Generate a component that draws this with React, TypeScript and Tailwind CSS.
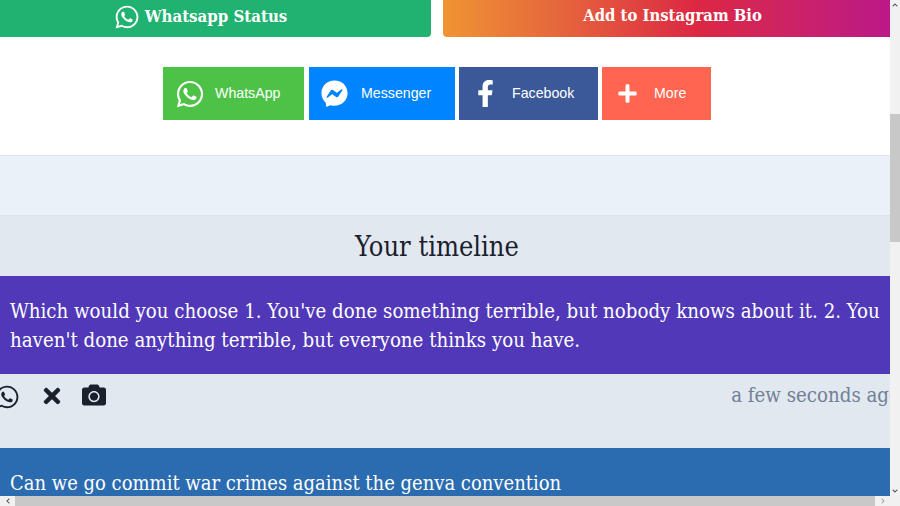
import React from "react";
import { FaWhatsapp, FaFacebookMessenger, FaFacebookF, FaPlus, FaTimes, FaCamera, FaChevronUp, FaChevronDown, FaChevronLeft, FaChevronRight } from "react-icons/fa";

const serif = "font-['DejaVu_Serif_Condensed','DejaVu_Serif',serif]";

function Share({ bg, w, ml, icon, label, gap }: { bg: string; w: string; ml: string; icon: React.ReactNode; label: string; gap: string }) {
  return (
    <div className={`${bg} ${w} ${ml} ${gap} h-[53px] flex items-center text-white text-[14.2px] font-['Liberation_Sans',sans-serif]`}>
      {icon}
      <span>{label}</span>
    </div>
  );
}

export default function App() {
  return (
    <div className={`w-[900px] h-[506px] overflow-hidden flex flex-col bg-white ${serif} [font-stretch:condensed]`}>
      <div className="flex h-[496px] min-h-0">
        <div className="w-[890px] overflow-hidden flex flex-col">
          <div className="flex h-[37px] shrink-0">
            <div className="w-[431px] bg-[#1fb270] rounded-br-[4px] flex items-center justify-center gap-[5px] pr-[30px] text-white font-bold text-[16.7px] pb-[4px]">
              <FaWhatsapp className="text-[26px]" />
              <span>Whatsapp Status</span>
            </div>
            <div className="ml-[12px] flex-1 rounded-bl-[4px] bg-[linear-gradient(90deg,#f09433,#e6683c_25%,#dc2743_57%,#cc2366_78%,#bc1888)] flex items-center justify-center pb-[4px] pl-[12px] text-white font-bold text-[16.5px]">
              Add to Instagram Bio
            </div>
          </div>
          <div className="h-[119px] shrink-0 flex pt-[30px] pl-[163px] border-b border-[#dfe5ed]">
            <Share bg="bg-[#4dc247]" w="w-[141px] pl-[12px]" ml="" gap="gap-[10px]" label="WhatsApp" icon={<FaWhatsapp className="text-[30px]" />} />
            <Share bg="bg-[#0084ff]" w="w-[146px] pl-[12px]" ml="ml-[5px]" gap="gap-[13px]" label="Messenger" icon={<FaFacebookMessenger className="text-[27px]" />} />
            <Share bg="bg-[#3b5998]" w="w-[139px] pl-[13px]" ml="ml-[4px]" gap="gap-[13px]" label="Facebook" icon={<FaFacebookF className="text-[27px]" />} />
            <Share bg="bg-[#ff6550]" w="w-[109px] pl-[15px]" ml="ml-[4px]" gap="gap-[16px]" label="More" icon={<FaPlus className="text-[21px]" />} />
          </div>
          <div className="h-[60px] shrink-0 bg-[#ebf1f8] border-b border-[#dde3ea]" />
          <div className="h-[60px] shrink-0 bg-[#e2e8f0] flex items-center justify-center pr-[16px] pt-[3px] text-[#1a202c] text-[27px]">
            Your timeline
          </div>
          <div className="h-[98px] shrink-0 bg-[#5038b8] text-white text-[20.25px] leading-[29px] px-[10px] py-[21px] whitespace-nowrap">
            <div>Which would you choose 1. You've done something terrible, but nobody knows about it. 2. You</div>
            <div>haven't done anything terrible, but everyone thinks you have.</div>
          </div>
          <div className="h-[74px] shrink-0 bg-[#e2e8f0] flex items-start pt-[7px] text-[#1a202c]">
            <FaWhatsapp className="text-[26px] ml-[-6px] mt-[3px]" />
            <FaTimes className="text-[24px] ml-[20px] mt-[3px]" />
            <FaCamera className="text-[24px] ml-[18px] mt-[2px]" />
            <div className="ml-auto mr-[-10px] text-[20.25px] leading-[28px] text-[#718096] whitespace-nowrap">a few seconds ago</div>
          </div>
          <div className="flex-1 bg-[#2b6cb0] text-white text-[20px] leading-[29px] px-[10px] pt-[21px] whitespace-nowrap">
            Can we go commit war crimes against the genva convention
          </div>
        </div>
        <div className="w-[10px] bg-[#f1f1f1] flex flex-col items-center text-[#505050]">
          <div className="h-[10px] flex items-center justify-center text-[6px]"><FaChevronUp /></div>
          <div className="h-[104px]" />
          <div className="h-[128px] w-full bg-[#c8c8c8]" />
          <div className="flex-1" />
          <div className="h-[10px] flex items-center justify-center text-[6px]"><FaChevronDown /></div>
        </div>
      </div>
      <div className="h-[10px] bg-[#f1f1f1] flex items-center text-[#505050]">
        <div className="w-[15px] flex justify-center text-[6px]"><FaChevronLeft /></div>
        <div className="w-[860px] h-full bg-[#c8c8c8]" />
        <div className="w-[15px] flex justify-center text-[6px] text-[#a0a0a0]"><FaChevronRight /></div>
        <div className="w-[10px]" />
      </div>
    </div>
  );
}
